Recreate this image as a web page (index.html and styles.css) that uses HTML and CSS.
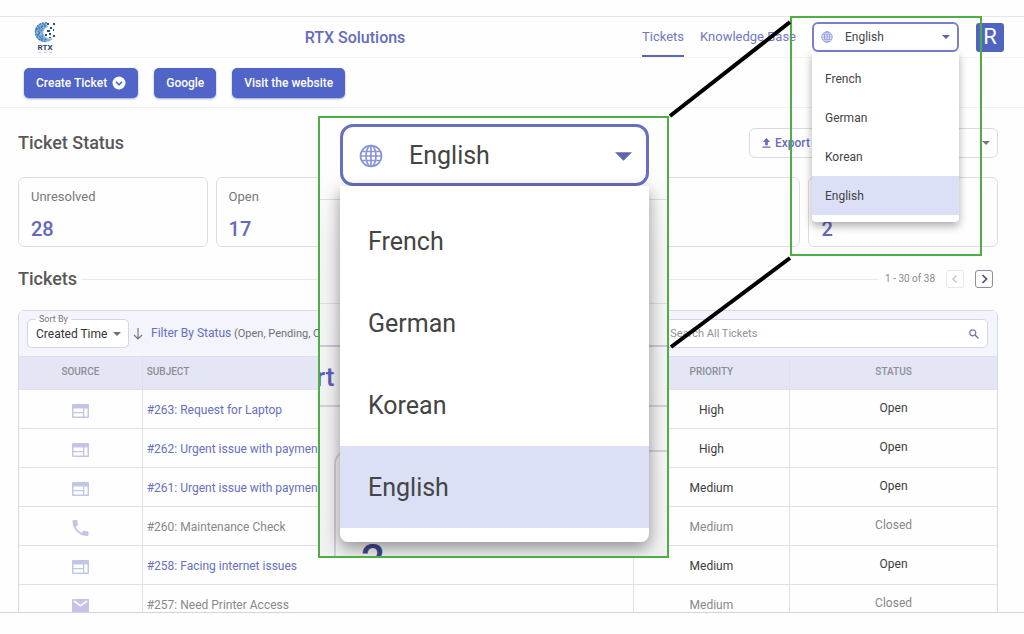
FILE: index.html
```html
<!DOCTYPE html>
<html lang="en">
<head>
<meta charset="utf-8">
<title>RTX Solutions - Tickets</title>
<link rel="stylesheet" href="styles.css">
</head>
<body>
<svg class="defs" aria-hidden="true">
  <symbol id="globe" viewBox="0 0 24 24"><g fill="none" stroke="currentColor" stroke-width="1.7"><circle cx="12" cy="12" r="10.5"/><ellipse cx="12" cy="12" rx="5" ry="10.5"/><path d="M12 1.500v21M1.500 12h21M3 7.500h18M3 16.500h18"/></g></symbol>
  <symbol id="caret" viewBox="0 0 10 5"><path d="M0 0h10L5 5z" fill="currentColor"/></symbol>
  <symbol id="web" viewBox="0 0 17 14"><path fill="currentColor" fill-rule="evenodd" d="M1 0h15a1 1 0 0 1 1 1v12a1 1 0 0 1-1 1H1a1 1 0 0 1-1-1V1a1 1 0 0 1 1-1zM1.500 4.500v3.500h9.500V4.500zM1.500 9.200v3.300h9.500V9.200zM12.300 4.500v8h3.200v-8z"/></symbol>
  <symbol id="phone" viewBox="3 3 18 18"><path fill="currentColor" d="M6.600 10.800c1.400 2.800 3.800 5.100 6.600 6.600l2.200-2.200c.3-.3.700-.4 1-.2 1.100.4 2.300.6 3.600.6.600 0 1 .4 1 1V20c0 .6-.4 1-1 1C10.600 21 3 13.400 3 4c0-.6.400-1 1-1h3.500c.6 0 1 .4 1 1 0 1.300.2 2.500.6 3.600.1.400 0 .7-.2 1z"/></symbol>
  <symbol id="mail" viewBox="0 0 17 14"><path fill="currentColor" d="M1 0h15a1 1 0 0 1 1 1v12a1 1 0 0 1-1 1H1a1 1 0 0 1-1-1V1a1 1 0 0 1 1-1z"/><path d="M2 2l6.500 4.800L15 2" fill="none" stroke="#fff" stroke-width="1.600"/></symbol>
</svg>

<div class="app">
  <header class="header">
    <a class="logo" href="#" aria-label="RTX home">
      <svg class="logo-mark" viewBox="0 0 22 21" aria-hidden="true">
        <path d="M12 1C5 0 0 5 1 11c.6 5 5 9 10 9 4 0 6-1 8-4-4 1-8 0-9-3-2-4 1-7 4-8z" fill="#8cb7e0"/>
        <g fill="none" stroke="#3c78b4" stroke-width="1.300" stroke-dasharray="2 1"><path d="M13 1C6 0 1 5 1.500 11c.8 5 5 8.500 10 8.500"/><path d="M12 4c-5 0-8 3-7.500 7.500.6 4 4 6 8 6"/><path d="M2 8l9-6M3 14l6-8M7 18l2-6"/></g>
        <g fill="#24507f"><rect x="13" y="1" width="2" height="2"/><rect x="19" y="1" width="2" height="2"/><rect x="16" y="5" width="2" height="2"/><rect x="13" y="8" width="3" height="2"/><rect x="19" y="7" width="1" height="2"/><rect x="11" y="12" width="2" height="2"/><rect x="15" y="11" width="2" height="2"/><rect x="19" y="13" width="2" height="2"/><rect x="15" y="15" width="2" height="1"/></g>
      </svg>
      <span class="logo-name">RTX</span>
      <span class="logo-rule"></span>
    </a>
    <h1 class="brand">RTX Solutions</h1>
    <nav class="nav">
      <a class="nav-link active" href="#">Tickets</a>
      <a class="nav-link" href="#">Knowledge Base</a>
    </nav>
    <div class="lang">
      <div class="lang-field">
        <svg class="lang-globe"><use href="#globe"/></svg>
        <select class="lang-select" aria-label="Language"><option>English</option><option>French</option><option>German</option><option>Korean</option></select>
        <svg class="lang-caret"><use href="#caret"/></svg>
      </div>
      <div class="lang-menu">
        <button class="lang-item">French</button>
        <button class="lang-item">German</button>
        <button class="lang-item">Korean</button>
        <button class="lang-item selected">English</button>
      </div>
    </div>
    <button class="avatar">R</button>
  </header>

  <div class="actions">
    <button class="action">Create Ticket
      <svg class="action-icon" viewBox="0 0 14 14" aria-hidden="true"><circle cx="7" cy="7" r="6.500" fill="#fff"/><path d="M4 5.800l3 3 3-3" fill="none" stroke="#5164c8" stroke-width="1.600"/></svg>
    </button>
    <button class="action">Google</button>
    <button class="action">Visit the website</button>
  </div>

  <main class="main">
    <div class="status-head">
      <h2 class="title">Ticket Status</h2>
      <div class="export">
        <button class="export-button">
          <svg class="export-icon" viewBox="0 0 9 11" aria-hidden="true"><path fill="currentColor" d="M4.500 0L8.500 4.500H6V8H3V4.500H.500zM0 9.300h9v1.500H0z"/></svg>Export</button>
        <button class="export-more" aria-label="More"><svg class="small-caret"><use href="#caret"/></svg></button>
      </div>
    </div>

    <div class="cards">
      <section class="card"><span class="card-label">Unresolved</span><strong class="card-value">28</strong></section>
      <section class="card"><span class="card-label">Open</span><strong class="card-value">17</strong></section>
      <section class="card"></section>
      <section class="card"></section>
      <section class="card"><span class="card-label">&nbsp;</span><strong class="card-value">2</strong></section>
    </div>

    <div class="list-head">
      <h2 class="title">Tickets</h2>
      <span class="rule"></span>
      <span class="range">1 - 30 of 38</span>
      <button class="pager" disabled aria-label="Previous"><svg class="chevron" viewBox="0 0 10 10"><path d="M6.500 1.500L3 5l3.500 3.500" fill="none" stroke="currentColor" stroke-width="1.500"/></svg></button>
      <button class="pager" aria-label="Next"><svg class="chevron" viewBox="0 0 10 10"><path d="M3.500 1L7.500 5l-4 4" fill="none" stroke="currentColor" stroke-width="1.700"/></svg></button>
    </div>

    <div class="panel">
      <div class="filters">
        <div class="sort">
          <label class="sort-label" for="sort">Sort By</label>
          <select class="sort-select" id="sort"><option>Created Time</option></select>
          <svg class="sort-caret"><use href="#caret"/></svg>
        </div>
        <svg class="arrow" viewBox="0 0 10 12" aria-hidden="true"><path d="M5 0v11M1 7l4 4 4-4" fill="none" stroke="currentColor" stroke-width="1.200"/></svg>
        <p class="filter"><a class="filter-link" href="#">Filter By Status</a> (Open, Pending, On Hold)</p>
        <div class="search">
          <input class="search-input" type="text" placeholder="Search All Tickets" aria-label="Search All Tickets">
          <svg class="search-icon" viewBox="0 0 10 10" aria-hidden="true"><circle cx="3.800" cy="3.800" r="3" fill="none" stroke="currentColor" stroke-width="1.200"/><path d="M6 6l3.500 3.500" stroke="currentColor" stroke-width="1.400"/></svg>
        </div>
      </div>
      <table class="tickets">
        <colgroup><col class="col-source"><col class="col-subject"><col class="col-priority"><col class="col-status"></colgroup>
        <thead><tr><th>SOURCE</th><th class="subject">SUBJECT</th><th>PRIORITY</th><th>STATUS</th></tr></thead>
        <tbody>
          <tr><td><svg class="source"><use href="#web"/></svg></td><td class="subject"><a href="#">#263: Request for Laptop</a></td><td>High</td><td class="state">Open</td></tr>
          <tr><td><svg class="source"><use href="#web"/></svg></td><td class="subject"><a href="#">#262: Urgent issue with payment</a></td><td>High</td><td class="state">Open</td></tr>
          <tr><td><svg class="source"><use href="#web"/></svg></td><td class="subject"><a href="#">#261: Urgent issue with payment</a></td><td>Medium</td><td class="state">Open</td></tr>
          <tr class="closed"><td><svg class="source tall"><use href="#phone"/></svg></td><td class="subject"><a href="#">#260: Maintenance Check</a></td><td>Medium</td><td class="state">Closed</td></tr>
          <tr><td><svg class="source"><use href="#web"/></svg></td><td class="subject"><a href="#">#258: Facing internet issues</a></td><td>Medium</td><td class="state">Open</td></tr>
          <tr class="closed"><td><svg class="source"><use href="#mail"/></svg></td><td class="subject"><a href="#">#257: Need Printer Access</a></td><td>Medium</td><td class="state">Closed</td></tr>
        </tbody>
      </table>
    </div>
  </main>
</div>

<div class="focus-box"></div>
<svg class="leaders" viewBox="0 0 130 340" aria-hidden="true"><path d="M124 7L4 101M124 243L5 332" stroke="#000" stroke-width="4"/></svg>

<div class="zoom">
  <div class="zoom-back" aria-hidden="true">
    <span class="zoom-line line-a"></span>
    <span class="zoom-line line-b"></span>
    <span class="zoom-line line-c"></span>
    <span class="zoom-line line-d"></span>
    <span class="zoom-text">rt</span>
    <span class="zoom-card">2</span>
  </div>
  <div class="lang lang-large">
    <div class="lang-field">
      <svg class="lang-globe"><use href="#globe"/></svg>
      <select class="lang-select" aria-label="Language, enlarged"><option>English</option><option>French</option><option>German</option><option>Korean</option></select>
      <svg class="lang-caret"><use href="#caret"/></svg>
    </div>
    <div class="lang-menu">
      <button class="lang-item">French</button>
      <button class="lang-item">German</button>
      <button class="lang-item">Korean</button>
      <button class="lang-item selected">English</button>
    </div>
  </div>
</div>
</body>
</html>
```

FILE: styles.css
```css
* { box-sizing: border-box; }

body {
  position: relative;
  display: flex;
  flex-direction: column;
  height: 100vh;
  margin: 0;
  padding: 16px 0 21px;
  overflow: hidden;
  background: #fefefe;
  color: #444;
  font: 12px/16px Roboto, "Liberation Sans", sans-serif;
}

button, select, input { margin: 0; font: inherit; color: inherit; }
button { cursor: pointer; }
a { color: #6670c2; text-decoration: none; }
svg { display: block; }
.defs { position: absolute; width: 0; height: 0; }

.app {
  flex: 1;
  min-height: 0;
  overflow: hidden;
  border-top: 1px solid #e4e6ee;
  border-bottom: 1px solid #d4d4de;
}

/* Header */
.header {
  display: flex;
  align-items: center;
  height: 41px;
  padding: 0 20px 0 22px;
  border-bottom: 1px solid #f4f4f6;
}
.logo {
  display: flex;
  flex-direction: column;
  align-items: center;
  width: 46px;
}
.logo-mark { width: 22px; height: 21px; }
.logo-name { color: #2c4468; font-size: 8px; line-height: 9px; font-weight: 700; }
.logo-rule { width: 14px; border-top: 1px dashed #c4d4e6; }
.brand {
  flex: 1;
  margin: 0;
  padding-top: 2px;
  color: #666cbc;
  font-size: 16px;
  line-height: 20px;
  font-weight: 500;
  text-align: center;
}
.nav { display: flex; align-self: stretch; gap: 16px; margin-right: 16px; }
.nav-link { padding-top: 12px; font-size: 13px; border-bottom: 2px solid transparent; color: #7078c2; }
.nav-link.active { border-color: #5b67b8; }
.avatar {
  width: 28px;
  height: 29px;
  margin-left: 17px;
  padding: 0;
  border: 0;
  border-radius: 3px;
  background: #5164c4;
  color: #fff;
  font-size: 22px;
}

/* Language picker */
.lang { position: relative; width: 147px; }
.lang-field {
  position: relative;
  display: flex;
  align-items: center;
  height: 30px;
  padding: 0 7px 0 7px;
  border: 2px solid #7a80cc;
  border-radius: 6px;
  background: #fff;
}
.lang-globe { width: 12px; height: 12px; color: #8a94dc; flex: none; }
.lang-caret { width: 8px; height: 4px; color: #5c64b8; flex: none; pointer-events: none; }
.lang-select {
  flex: 1;
  min-width: 0;
  padding: 0 0 0 12px;
  border: 0;
  background: none;
  appearance: none;
}
.lang-menu {
  position: absolute;
  z-index: 2;
  top: 100%;
  left: 0;
  right: 0;
  padding: 7px 0;
  border-radius: 0 0 4px 4px;
  background: #fff;
  box-shadow: 0 4px 8px rgba(0, 0, 0, .32);
}
.lang-item {
  display: block;
  width: 100%;
  height: 39px;
  padding: 0 13px;
  border: 0;
  background: none;
  text-align: left;
}
.lang-item.selected { background: #dbe0f6; }

/* Action buttons */
.actions {
  display: flex;
  gap: 16px;
  padding: 10px 24px 9px;
  border-bottom: 1px solid #eff0f4;
}
.action {
  display: flex;
  align-items: center;
  gap: 5px;
  height: 30px;
  padding: 0 12px;
  border: 0;
  border-radius: 5px;
  background: #5164c8;
  box-shadow: 0 1px 2px rgba(60, 70, 160, .5);
  color: #fff;
  font-weight: 500;
}
.action-icon { width: 14px; height: 14px; }

.main { padding: 20px 26px 0 18px; }
.title { margin: 0; color: #585858; font-size: 18px; line-height: 24px; font-weight: 500; }

.status-head { display: flex; align-items: center; justify-content: space-between; }
.export {
  display: flex;
  justify-content: space-between;
  width: 249px;
  height: 30px;
  border: 1px solid #d9d9e4;
  border-radius: 6px;
}
.export-button {
  display: flex;
  align-items: center;
  gap: 4px;
  padding: 0 12px;
  border: 0;
  background: none;
  color: #666cc0;
  font-weight: 500;
}
.export-icon { width: 9px; height: 10px; }
.export-more { padding: 0 7px; border: 0; background: none; color: #777; }
.small-caret { width: 8px; height: 4px; }

/* Summary cards */
.cards { display: grid; grid-template-columns: repeat(5, 1fr); gap: 8px; margin-top: 19px; }
.card {
  display: flex;
  flex-direction: column;
  gap: 12px;
  height: 70px;
  padding: 11px 12px;
  border: 1px solid #dcdce8;
  border-radius: 6px;
}
.card-label { color: #787878; font-size: 13px; line-height: 16px; }
.card-value { color: #6468bc; font-size: 20px; line-height: 24px; font-weight: 500; }

/* List heading */
.list-head { display: flex; align-items: center; margin: 20px 5px 19px 0; }
.rule { flex: 1; margin: 0 6px 0 4px; border-top: 1px solid #e8e8f0; }
.range { color: #8a8a8a; font-size: 10px; }
.pager {
  display: flex;
  align-items: center;
  justify-content: center;
  width: 18px;
  height: 18px;
  margin-left: 11px;
  padding: 0;
  border: 1px solid #8e8ea8;
  border-radius: 3px;
  background: none;
  color: #505078;
}
.pager:disabled { border-color: #e6e6ec; color: #c8c8d4; }
.chevron { width: 10px; height: 10px; }

/* Filters */
.panel { border: 1px solid #d9daea; border-radius: 6px 6px 0 0; overflow: hidden; }
.filters { display: flex; align-items: center; height: 45px; padding: 0 9px 0 8px; background: #f3f4fc; }
.sort { position: relative; width: 102px; }
.sort-label {
  position: absolute;
  top: -6px;
  left: 9px;
  padding: 0 3px;
  background: linear-gradient(#f3f4fc 50%, #fff 50%);
  color: #777;
  font-size: 9px;
  line-height: 12px;
}
.sort-select {
  display: block;
  width: 100%;
  height: 29px;
  padding: 0 8px;
  border: 1px solid #d4d5e2;
  border-radius: 5px;
  background: #fff;
  color: #333;
  appearance: none;
}
.sort-caret { position: absolute; top: 13px; right: 8px; width: 8px; height: 4px; color: #707070; pointer-events: none; }
.arrow { width: 10px; height: 12px; margin: 0 8px 0 4px; color: #777; }
.filter { margin: 0; color: #707070; font-size: 11px; white-space: nowrap; }
.filter-link { font-size: 12px; }
.search {
  display: flex;
  align-items: center;
  width: 34%;
  height: 29px;
  margin-left: auto;
  padding: 0 8px;
  border: 1px solid #d4d5e6;
  border-radius: 5px;
  background: #fff;
}
.search-input { flex: 1; min-width: 0; padding: 0; border: 0; outline: 0; background: none; font-size: 11px; }
.search-input::placeholder { color: #929292; }
.search-icon { width: 10px; height: 10px; color: #7076a0; }

/* Tickets table */
.tickets { width: 100%; table-layout: fixed; border-collapse: collapse; }
.col-source { width: 12.6%; }
.col-subject { width: 50.2%; }
.col-priority { width: 16%; }
.tickets th { height: 33px; padding: 0 0 2px; background: #e4e6f6; color: #8c8c94; font-size: 10px; font-weight: 500; }
.tickets td { height: 39px; padding: 1px 0 0; color: #3c3c3c; text-align: center; }
.tickets th, .tickets td { border: 1px solid #e0e0ea; border-width: 1px 0 1px 1px; }
.tickets th:first-child, .tickets td:first-child { border-left: 0; }
.tickets .subject { padding-left: 4px; text-align: left; }
.tickets td.state { padding: 0 0 3px; }
.tickets .closed td, .tickets .closed a { color: #888; }
.tickets .source { width: 17px; height: 14px; margin: 3px auto 0; color: #c4c5e6; }
.tickets .source.tall { height: 16px; }

/* Callout annotations drawn over the page */
.focus-box {
  position: absolute;
  z-index: 4;
  top: 16px;
  left: 790px;
  width: 192px;
  height: 240px;
  border: 2px solid #4fae43;
  pointer-events: none;
}
.leaders { position: absolute; z-index: 4; top: 15px; left: 666px; width: 130px; height: 340px; pointer-events: none; }
.zoom {
  position: absolute;
  z-index: 3;
  top: 116px;
  left: 318px;
  width: 351px;
  height: 442px;
  padding: 6px 18px 0 20px;
  border: 2px solid #4fae43;
  overflow: hidden;
  background: linear-gradient(#fdfefd 10%, #f3f4f3 30%, #f1f1f1);
}
.zoom-back { position: absolute; inset: 0; color: #5b5fb8; }
.zoom-line { position: absolute; left: 0; right: 0; border-top: 1px solid #dcdce2; }
.line-a { top: 81px; }
.line-b { top: 185px; }
.line-c { top: 227px; border-top: 2px solid #c8c8dc; }
.line-d { top: 287px; border-top: 2px solid #d0d0d8; }
.zoom-text { position: absolute; top: 244px; left: -4px; font-size: 26px; line-height: 30px; font-weight: 500; }
.zoom-card {
  position: absolute;
  top: 332px;
  left: 14px;
  right: -20px;
  height: 140px;
  padding: 84px 0 0 25px;
  border: 2px solid #cfd0d8;
  border-radius: 14px;
  color: #41458f;
  font-size: 42px;
  line-height: 48px;
  font-weight: 500;
}
.lang-large { width: 100%; font-size: 25px; line-height: 32px; }
.lang-large .lang-field { height: 62px; padding: 2px 14px 0 16px; border: 3px solid #6670bc; border-radius: 13px; }
.lang-large .lang-globe { width: 24px; height: 24px; }
.lang-large .lang-caret { width: 17px; height: 9px; }
.lang-large .lang-select { padding-left: 26px; }
.lang-large .lang-menu { padding: 14px 0; border-radius: 0 0 8px 8px; box-shadow: 0 6px 16px rgba(0, 0, 0, .4); }
.lang-large .lang-item { height: 82px; padding: 2px 28px 0; }
```
